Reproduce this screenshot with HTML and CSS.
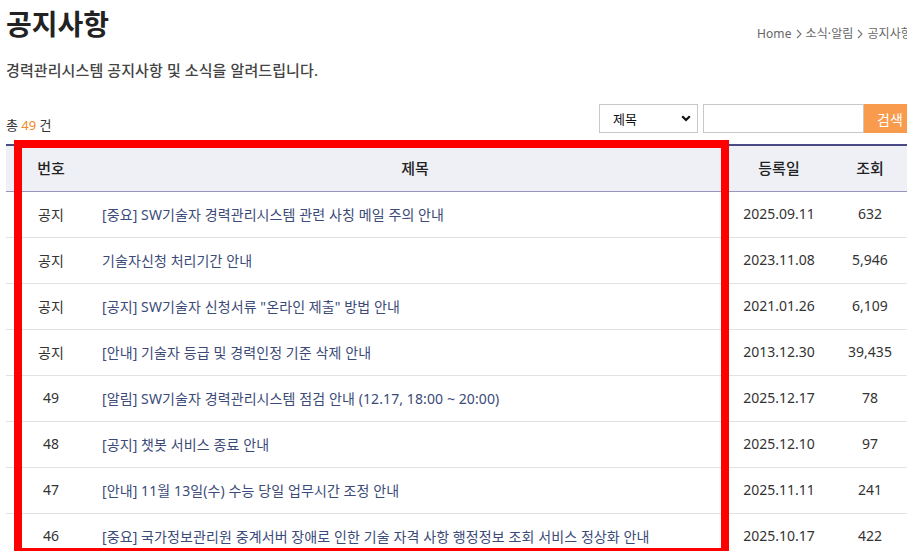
FILE: index.html
```html
<!DOCTYPE html>
<html lang="ko">
<head>
<meta charset="utf-8">
<title>공지사항</title>
<link rel="stylesheet" href="styles.css">
</head>
<body>
<div class="page">
  <div class="head">
    <h1 class="title">공지사항</h1>
    <nav class="crumbs">
      <span>Home</span>
      <svg class="chev" width="6" height="10" viewBox="0 0 6 10"><path d="M1 1 L5 5 L1 9" fill="none" stroke="#777" stroke-width="1.1"/></svg>
      <span>소식·알림</span>
      <svg class="chev" width="6" height="10" viewBox="0 0 6 10"><path d="M1 1 L5 5 L1 9" fill="none" stroke="#777" stroke-width="1.1"/></svg>
      <span>공지사항</span>
    </nav>
  </div>
  <p class="desc">경력관리시스템 공지사항 및 소식을 알려드립니다.</p>

  <div class="toolbar">
    <div class="total">총 <em>49</em> 건</div>
    <div class="search">
      <div class="select">
        <span>제목</span>
        <svg width="10" height="7" viewBox="0 0 10 7"><path d="M1.2 1.2 L5 5 L8.8 1.2" fill="none" stroke="#111" stroke-width="2.2"/></svg>
      </div>
      <div class="input"></div>
      <button class="btn">검색</button>
    </div>
  </div>

  <table class="board">
    <colgroup>
      <col class="c-no"><col class="c-title"><col class="c-date"><col class="c-view">
    </colgroup>
    <thead>
      <tr><th>번호</th><th>제목</th><th>등록일</th><th>조회</th></tr>
    </thead>
    <tbody>
      <tr><td>공지</td><td class="t">[중요] SW기술자 경력관리시스템 관련 사칭 메일 주의 안내</td><td>2025.09.11</td><td>632</td></tr>
      <tr><td>공지</td><td class="t">기술자신청 처리기간 안내</td><td>2023.11.08</td><td>5,946</td></tr>
      <tr><td>공지</td><td class="t">[공지] SW기술자 신청서류 "온라인 제출" 방법 안내</td><td>2021.01.26</td><td>6,109</td></tr>
      <tr><td>공지</td><td class="t">[안내] 기술자 등급 및 경력인정 기준 삭제 안내</td><td>2013.12.30</td><td>39,435</td></tr>
      <tr><td>49</td><td class="t">[알림] SW기술자 경력관리시스템 점검 안내 (12.17, 18:00 ~ 20:00)</td><td>2025.12.17</td><td>78</td></tr>
      <tr><td>48</td><td class="t">[공지] 챗봇 서비스 종료 안내</td><td>2025.12.10</td><td>97</td></tr>
      <tr><td>47</td><td class="t">[안내] 11월 13일(수) 수능 당일 업무시간 조정 안내</td><td>2025.11.11</td><td>241</td></tr>
      <tr><td>46</td><td class="t">[중요] 국가정보관리원 중계서버 장애로 인한 기술 자격 사항 행정정보 조회 서비스 정상화 안내</td><td>2025.10.17</td><td>422</td></tr>
    </tbody>
  </table>
</div>
<div class="highlight"></div>
</body>
</html>
```

FILE: styles.css
```css
html, body {
  margin: 0;
  padding: 0;
  background: #fff;
  overflow: hidden;
}
body {
  font-family: "Noto Sans", "Noto Sans CJK KR", sans-serif;
  color: #333;
  position: relative;
  width: 907px;
  height: 551px;
}
.page {
  margin-left: 6px;
  width: 910px;
}
.head {
  display: flex;
  justify-content: space-between;
  align-items: flex-end;
  padding-top: 6px;
}
.title {
  margin: 0;
  font-size: 28px;
  line-height: 36px;
  font-weight: 700;
  color: #222;
  letter-spacing: 0;
}
.crumbs {
  display: flex;
  align-items: center;
  gap: 4px;
  font-size: 12px;
  color: #666;
  line-height: 16px;
  margin-right: 4px;
  letter-spacing: 0.1px;
}
.chev { display: block; }
.desc {
  margin: 18px 0 0;
  font-size: 15px;
  line-height: 20px;
  font-weight: 500;
  color: #444;
  letter-spacing: 0.1px;
}
.toolbar {
  margin-top: 24px;
  display: flex;
  justify-content: space-between;
  align-items: flex-end;
}
.total {
  font-size: 13px;
  line-height: 16px;
  color: #333;
}
.total em {
  font-style: normal;
  color: #f08a24;
}
.search {
  display: flex;
  align-items: stretch;
  height: 29px;
}
.select {
  box-sizing: border-box;
  width: 99px;
  border: 1px solid #c8c8c8;
  display: flex;
  align-items: center;
  justify-content: space-between;
  padding: 0 6px 0 13px;
  font-size: 13px;
  color: #111;
}
.select svg { display: block; }
.input {
  box-sizing: border-box;
  width: 161px;
  margin-left: 5px;
  border: 1px solid #c8c8c8;
}
.btn {
  width: 52px;
  border: 0;
  background: #f89b4d;
  color: #fff;
  font-family: inherit;
  font-size: 14px;
  padding: 0;
}
.board {
  margin-top: 11px;
  width: 910px;
  border-collapse: collapse;
  table-layout: fixed;
}
.c-no { width: 90px; }
.c-title { width: 638px; }
.c-date { width: 90px; }
.c-view { width: 92px; }
.board thead tr {
  background: #eef0f5;
  border-top: 2px solid #4a4a87;
  border-bottom: 1px solid #9896bd;
}
.board th {
  height: 43px;
  padding: 0 0 2px;
  font-size: 15px;
  font-weight: 500;
  color: #222;
  text-align: center;
}
.board tbody tr {
  border-bottom: 1px solid #e2e2e2;
}
.board td {
  height: 43px;
  padding: 0 0 2px;
  font-size: 14px;
  color: #333;
  text-align: center;
  white-space: nowrap;
  overflow: hidden;
}
.board td.t {
  text-align: left;
  padding-left: 6px;
  color: #3b4a78;
  letter-spacing: 0.1px;
}
.highlight {
  position: absolute;
  left: 14px;
  top: 140px;
  width: 715px;
  height: 416px;
  box-sizing: border-box;
  border: 8px solid #ff0000;
}
```
